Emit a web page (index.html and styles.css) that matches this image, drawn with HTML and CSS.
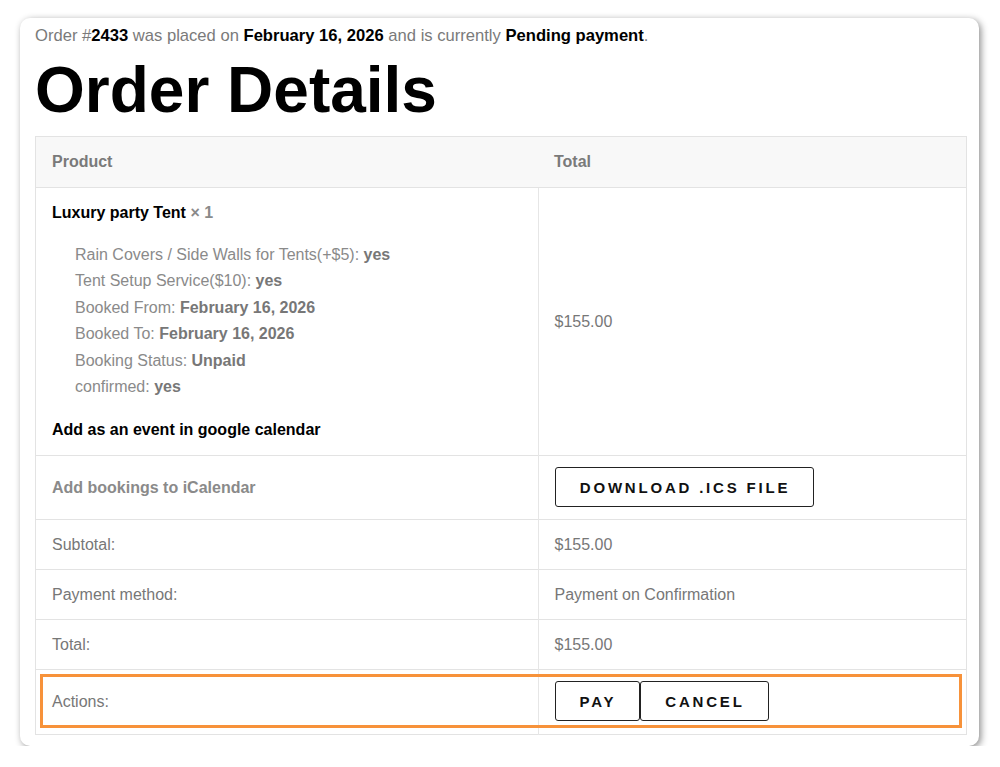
FILE: index.html
```html
<!DOCTYPE html>
<html>
<head>
<meta charset="utf-8">
<link rel="stylesheet" href="styles.css">
</head>
<body>
<div class="card">
  <p class="order-line">Order #<mark>2433</mark> was placed on <mark>February 16, 2026</mark> and is currently <mark>Pending payment</mark>.</p>
  <h2 class="title">Order Details</h2>
  <div class="table-wrap">
    <table class="order-table">
      <thead>
        <tr><th class="col-a">Product</th><th class="col-b">Total</th></tr>
      </thead>
      <tbody>
        <tr class="item-row">
          <td class="col-a">
            <div class="item-name">Luxury party Tent <span class="qty">× 1</span></div>
            <ul class="meta">
              <li>Rain Covers / Side Walls for Tents(+$5): <strong>yes</strong></li>
              <li>Tent Setup Service($10): <strong>yes</strong></li>
              <li>Booked From: <strong>February 16, 2026</strong></li>
              <li>Booked To: <strong>February 16, 2026</strong></li>
              <li>Booking Status: <strong>Unpaid</strong></li>
              <li>confirmed: <strong>yes</strong></li>
            </ul>
            <div class="gcal">Add as an event in google calendar</div>
          </td>
          <td class="col-b">$155.00</td>
        </tr>
        <tr>
          <td class="col-a ical">Add bookings to iCalendar</td>
          <td class="col-b btn-cell"><button class="btn btn-ics">DOWNLOAD .ICS FILE</button></td>
        </tr>
        <tr><td class="col-a">Subtotal:</td><td class="col-b">$155.00</td></tr>
        <tr><td class="col-a">Payment method:</td><td class="col-b">Payment on Confirmation</td></tr>
        <tr><td class="col-a">Total:</td><td class="col-b">$155.00</td></tr>
        <tr class="actions-row">
          <td class="col-a">Actions:</td>
          <td class="col-b btn-cell"><button class="btn btn-pay">PAY</button><button class="btn btn-cancel">CANCEL</button></td>
        </tr>
      </tbody>
    </table>
    <div class="highlight"></div>
  </div>
</div>
</body>
</html>
```
FILE: styles.css
```css
html, body {
  margin: 0;
  padding: 0;
  background: #ffffff;
}
body {
  font-family: "Liberation Sans", Arial, sans-serif;
  color: #777777;
  font-size: 16px;
}
.card {
  box-sizing: border-box;
  width: 959px;
  height: 728px;
  margin: 18px 0 0 20px;
  padding: 0 12px 0 15px;
  background: #fff;
  border-radius: 10px;
  box-shadow: 2px 2px 7px rgba(0, 0, 0, 0.45);
  overflow: hidden;
}
.order-line {
  margin: 0;
  padding-top: 9px;
  font-size: 16.6px;
  line-height: 18px;
  color: #7a7a7a;
}
.order-line mark {
  background: none;
  color: #000;
  font-weight: bold;
}
.title {
  margin: 7px 0 0 0;
  font-size: 64px;
  line-height: 76px;
  font-weight: bold;
  color: #000;
}
.table-wrap {
  position: relative;
  margin-top: 8px;
}
.order-table {
  width: 932px;
  border-collapse: collapse;
  border: 1px solid #e3e3e3;
  table-layout: fixed;
}
.order-table th,
.order-table td {
  text-align: left;
  vertical-align: middle;
  padding: 16px 16px;
  line-height: 17px;
  border-top: 1px solid #e3e3e3;
}
.order-table th {
  background: #f8f8f8;
  font-weight: bold;
  color: #7a7a7a;
  padding: 16px 16px 17px;
}
.col-a { width: 470px; }
.order-table td.col-b {
  border-left: 1px solid #e6e6e6;
}
.item-row td.col-a {
  padding-top: 16px;
  padding-bottom: 17px;
}
.item-name {
  color: #000;
  font-weight: bold;
  line-height: 17px;
}
.qty {
  color: #8a8a8a;
  font-weight: bold;
}
.meta {
  margin: 21px 0 21px 0;
  padding: 0 0 0 23px;
  list-style: none;
  line-height: 26.4px;
  color: #8a8a8a;
}
.meta strong {
  color: #777;
}
.gcal {
  color: #000;
  font-weight: bold;
  line-height: 17px;
}
.ical {
  font-weight: bold;
  color: #8a8a8a;
}
.order-table td.btn-cell {
  padding-top: 11px;
  padding-bottom: 12px;
}
.btn {
  height: 40px;
  box-sizing: border-box;
  background: #fff;
  border: 1px solid #222;
  border-radius: 3px;
  font-family: "Liberation Sans", Arial, sans-serif;
  font-size: 15px;
  font-weight: bold;
  letter-spacing: 2.8px;
  color: #111;
  vertical-align: middle;
  margin: 0;
}
.btn-ics {
  width: 259px;
  padding: 0 0 0 2px;
}
.btn-pay {
  width: 85px;
  padding: 0 0 0 2px;
}
.btn-cancel {
  width: 129px;
  padding: 0 0 0 2px;
}
.order-table .actions-row td {
  padding-top: 11px;
  padding-bottom: 13px;
}
.highlight {
  position: absolute;
  left: 5px;
  right: 5px;
  bottom: 7px;
  height: 48px;
  border: 3px solid #f7923a;
  pointer-events: none;
}
```
